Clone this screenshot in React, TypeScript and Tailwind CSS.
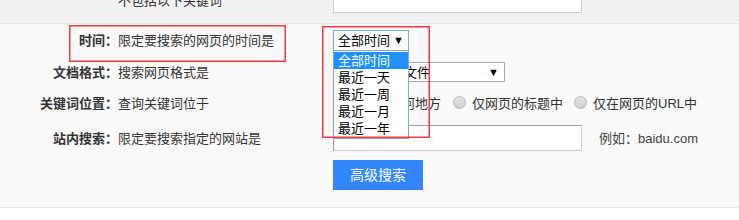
const font = { fontFamily: '"Liberation Sans", "Noto Sans CJK SC", sans-serif' };

function Radio() {
  return (
    <span className="inline-block h-[13px] w-[13px] shrink-0 rounded-full border border-[#b8b8b8] bg-gradient-to-b from-[#e4e4e4] to-[#cfcfcf]" />
  );
}

function Row({ label, desc, className, children }: { label: string; desc: string; className: string; children?: React.ReactNode }) {
  return (
    <div className={`grid grid-cols-[118px_215px_1fr] items-center ${className}`}>
      <span className="text-right font-bold text-[#333]">{label}</span>
      <span className="text-[#333]">{desc}</span>
      <div className="flex items-center">{children}</div>
    </div>
  );
}

export default function App() {
  const times = ['全部时间', '最近一天', '最近一周', '最近一月', '最近一年'];

  return (
    <div className="relative h-[220px] w-[739px] overflow-hidden bg-white text-[13px] leading-none" style={font}>
      {/* top strip, scrolled off */}
      <div className="flex h-[24px] flex-col border-b border-[#e6e6e6] bg-[#f1f1f1]">
        <div className="-mt-[12px] grid h-[25px] shrink-0 grid-cols-[118px_215px_1fr] items-center">
          <span />
          <span className="text-[#333]">不包括以下关键词</span>
          <div className="h-[25px] w-[249px] border border-[#cfcfcf] bg-white" />
        </div>
      </div>

      <div className="flex flex-col border-b border-[#e6e6e6] bg-[#f9f9f9] pb-[17px] pt-[6px]">
        <Row label="时间：" desc="限定要搜索的网页的时间是" className="h-[21px]">
          <div className="flex h-[21px] w-[76px] items-center justify-between border border-[#7ea6e0] bg-white pl-[4px] pr-[4px] text-black">
            <span>全部时间</span>
            <span className="text-[11px]">▼</span>
          </div>
        </Row>

        <Row label="文档格式：" desc="搜索网页格式是" className="mt-[11px] h-[20px]">
          <div className="flex h-[20px] w-[172px] items-center justify-between border border-[#a9a9a9] bg-white pl-[5px] pr-[5px] text-black">
            <span>所有网页和文件</span>
            <span className="text-[11px]">▼</span>
          </div>
        </Row>

        <Row label="关键词位置：" desc="查询关键词位于" className="mt-[11px] h-[20px]">
          <div className="flex items-center text-[#333]">
            <Radio />
            <span className="ml-[4px]">网页的任何地方</span>
            <span className="ml-[12px]"><Radio /></span>
            <span className="ml-[6px]">仅网页的标题中</span>
            <span className="ml-[11px]"><Radio /></span>
            <span className="ml-[6px]">仅在网页的URL中</span>
          </div>
        </Row>

        <Row label="站内搜索：" desc="限定要搜索指定的网站是" className="mt-[12px] h-[26px]">
          <div className="h-[26px] w-[249px] border border-[#cdcdcd] border-l-[#a0a0a0] border-t-[#a0a0a0] bg-white" />
          <span className="ml-[17px] text-[#444]">例如：baidu.com</span>
        </Row>

        <div className="mt-[9px] grid grid-cols-[333px_1fr]">
          <span />
          <button className="h-[30px] w-[90px] bg-[#3385ff] text-[14px] text-white">高级搜索</button>
        </div>
      </div>

      {/* open dropdown list */}
      <div className="absolute left-[333px] top-[50px] flex w-[76px] flex-col border border-[#7ea6e0] bg-white py-[1px] text-black">
        {times.map((t, i) => (
          <div key={t} className={`flex h-[17px] items-center pl-[4px] ${i === 0 ? 'bg-[#1e90ff] text-white' : ''}`}>
            {t}
          </div>
        ))}
      </div>

      {/* annotation boxes */}
      <div className="absolute left-[69px] top-[25px] h-[37px] w-[217px] shadow-[inset_0_0_0_1.5px_#f03c3c]" />
      <div className="absolute left-[322px] top-[26px] h-[112px] w-[108px] shadow-[inset_0_0_0_1.5px_#f03c3c]" />
    </div>
  );
}
